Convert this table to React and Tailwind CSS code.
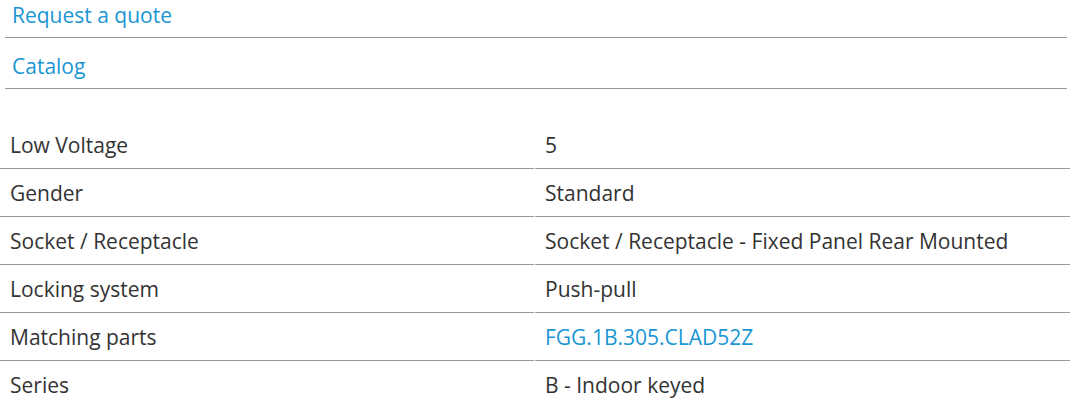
export default function App() {
  const rows = [
    ["Low Voltage", "5"],
    ["Gender", "Standard"],
    ["Socket / Receptacle", "Socket / Receptacle - Fixed Panel Rear Mounted"],
    ["Locking system", "Push-pull"],
    ["Matching parts", "FGG.1B.305.CLAD52Z", true],
    ["Series", "B - Indoor keyed"],
  ];
  return (
    <div className="w-[1073px] h-[406px] overflow-hidden bg-white text-[21px] leading-[28px] text-[#333333]" style={{ fontFamily: '"Open Sans", sans-serif' }}>
      <div className="ml-[5px] w-[1062px]">
        <div className="pt-[1px] pb-[8px] pl-[7px] border-b border-[#999999]">
          <a className="text-[#1a96d4]">Request a quote</a>
        </div>
        <div className="pt-[14px] pb-[8px] pl-[7px] border-b border-[#999999]">
          <a className="text-[#1a96d4]">Catalog</a>
        </div>
      </div>
      <div className="mt-[32px] w-[1070px] grid grid-cols-[534px_535px] gap-x-[1px]">
        {rows.map(([k, v, link], i) => (
          <div key={i} className="contents">
            <div className="pl-[10px] pt-[10px] pb-[9px] border-b border-[#999999]">{k}</div>
            <div className={"pl-[10px] pt-[10px] pb-[9px] border-b border-[#999999] " + (link ? "text-[#1a96d4]" : "")}>{v}</div>
          </div>
        ))}
      </div>
    </div>
  );
}
